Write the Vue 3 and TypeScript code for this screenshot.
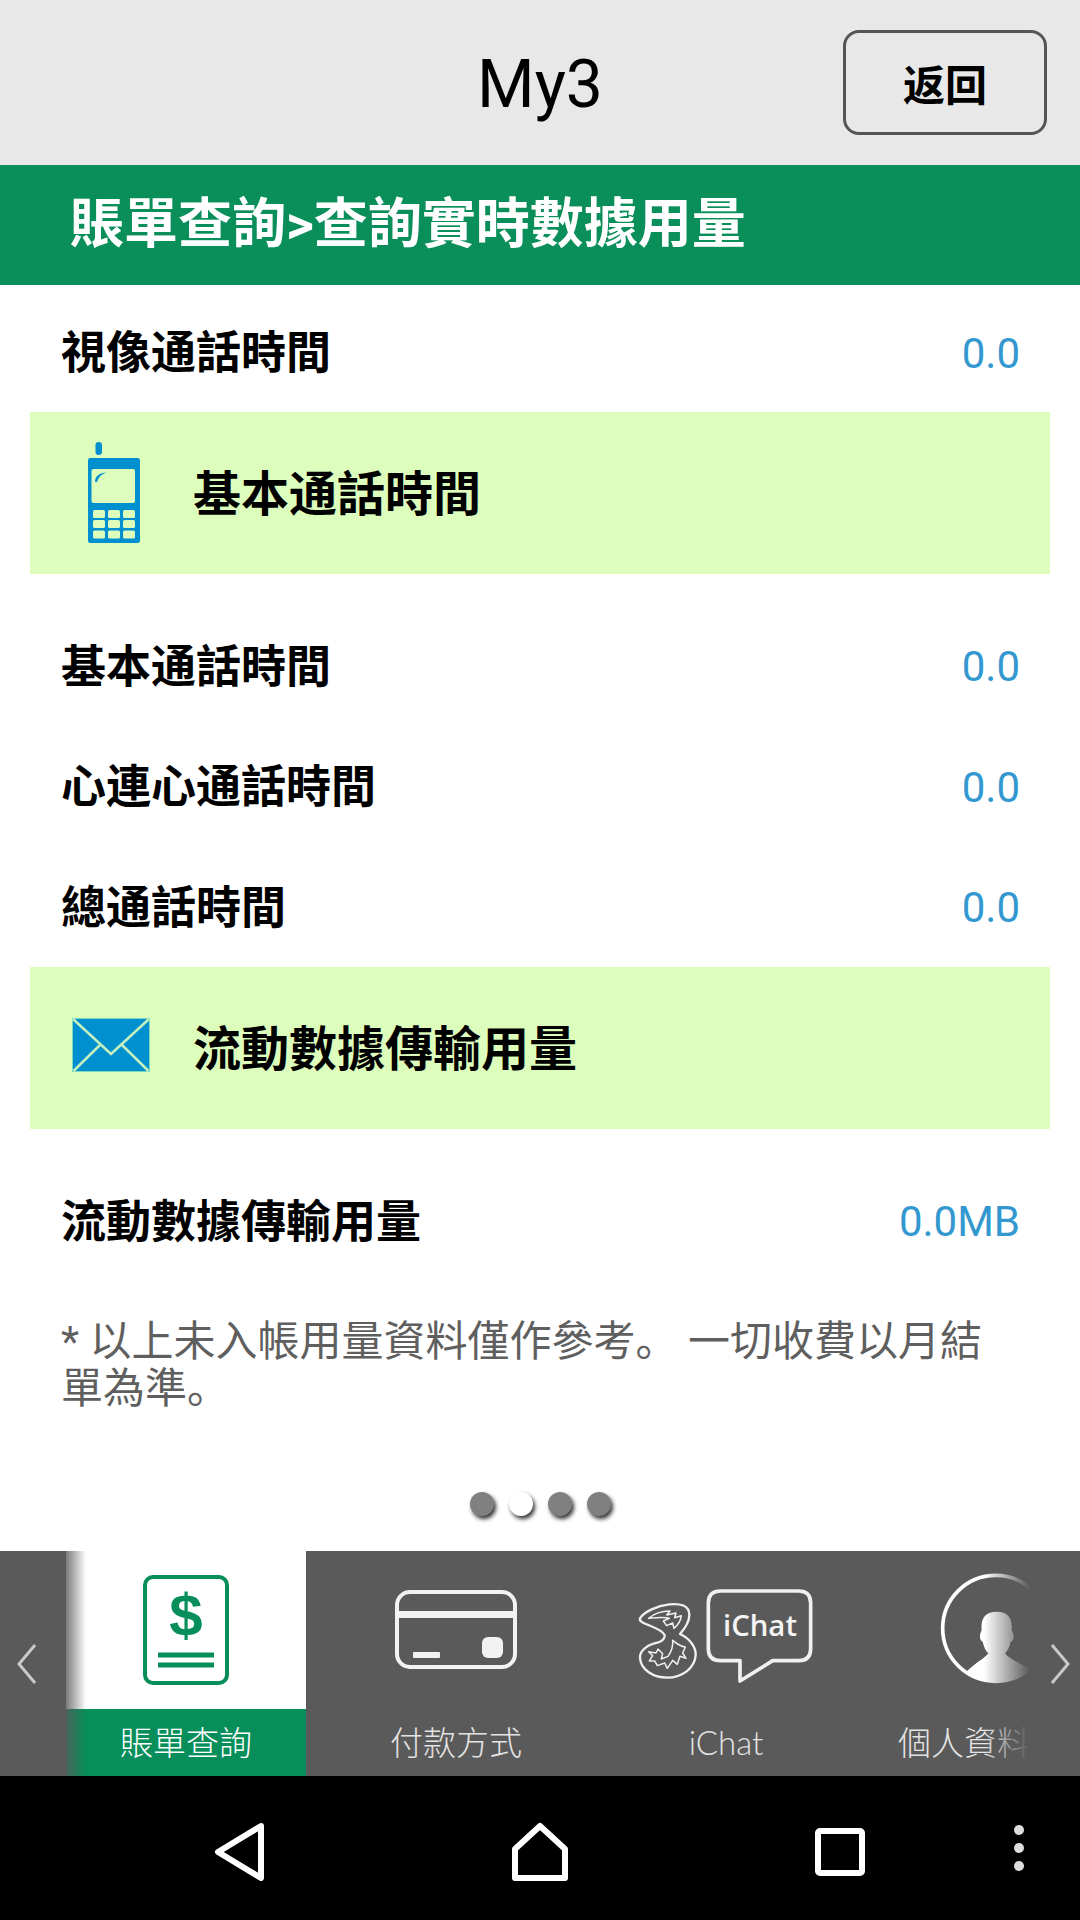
<script setup lang="ts">
interface Row { label: string; value: string }
const firstRows: Row[] = [{ label: '視像通話時間', value: '0.0' }]
const callRows: Row[] = [
  { label: '基本通話時間', value: '0.0' },
  { label: '心連心通話時間', value: '0.0' },
  { label: '總通話時間', value: '0.0' },
]
const dataRows: Row[] = [{ label: '流動數據傳輸用量', value: '0.0MB' }]
const dots: boolean[] = [false, true, false, false]
const keyRows: number[] = [70, 80, 90.5]
const keyCols: number[] = [21, 36, 51]
</script>

<template>
  <div class="screen">
    <header class="topbar">
      <div class="app-title">My3</div>
      <button class="back-btn" type="button">返回</button>
    </header>
    <div class="crumb">賬單查詢&gt;查詢實時數據用量</div>

    <main class="content">
      <div class="rows first">
        <div v-for="r in firstRows" :key="r.label" class="row">
          <span class="label">{{ r.label }}</span><span class="value">{{ r.value }}</span>
        </div>
      </div>

      <section class="band">
        <span class="band-icon">
          <svg width="78" height="105" viewBox="0 0 78 105">
            <rect x="23.500" y="2" width="6.500" height="13" rx="3.200" fill="#0090d0" />
            <rect x="16" y="18" width="52" height="85" rx="2.500" fill="#0090d0" />
            <rect x="19.500" y="29" width="43.500" height="34" rx="2" fill="#dcfdbc" />
            <path d="M23 42 C23 36 27 33 35 32.500 C30 34 27 36 25 42 Z" fill="#0090d0" />
            <template v-for="y in keyRows" :key="y">
              <rect v-for="x in keyCols" :key="x" :x="x" :y="y" width="12" height="8" rx="1.500" fill="#dcfdbc" />
            </template>
          </svg>
        </span>
        <span class="band-title">基本通話時間</span>
      </section>

      <div class="rows">
        <div v-for="r in callRows" :key="r.label" class="row">
          <span class="label">{{ r.label }}</span><span class="value">{{ r.value }}</span>
        </div>
      </div>

      <section class="band">
        <span class="band-icon">
          <svg class="mail" width="78" height="54" viewBox="0 0 78 54">
            <rect x="0.500" y="0.500" width="77" height="53" fill="#0090d0" stroke="#7fd8c0" stroke-width="1" />
            <path d="M1 1 L39 36 L77 1" fill="none" stroke="#c4f0c0" stroke-width="2.500" />
            <path d="M1.500 53 L28 27 M76.500 53 L50 27" fill="none" stroke="#c4f0c0" stroke-width="2.500" />
          </svg>
        </span>
        <span class="band-title">流動數據傳輸用量</span>
      </section>

      <div class="rows">
        <div v-for="r in dataRows" :key="r.label" class="row">
          <span class="label">{{ r.label }}</span><span class="value">{{ r.value }}</span>
        </div>
      </div>

      <p class="note">* 以上未入帳用量資料僅作參考。 一切收費以月結單為準。</p>

      <div class="dots">
        <span v-for="(on, i) in dots" :key="i" class="dot" :class="{ on }"></span>
      </div>
    </main>

    <nav class="tabbar">
      <div class="chev-cell left">
        <svg width="22" height="44" viewBox="0 0 22 44"><path d="M19 3 L3 22 L19 41" fill="none" stroke="#c8c8c8" stroke-width="3" /></svg>
      </div>
      <div class="track">
        <div class="tab active">
          <svg class="tab-icon" width="240" height="158" viewBox="0 0 240 158">
            <rect x="79" y="26" width="82" height="106" rx="8" fill="none" stroke="#078e5a" stroke-width="4" />
            <text x="120" y="85" text-anchor="middle" class="dollar">$</text>
            <path d="M92 104 H148 M92 114 H148" stroke="#078e5a" stroke-width="5" />
          </svg>
          <div class="tab-label">賬單查詢</div>
        </div>
        <div class="tab">
          <svg class="tab-icon" width="240" height="158" viewBox="0 0 240 158">
            <rect x="61" y="41" width="118" height="75" rx="13" fill="none" stroke="#f2f2f2" stroke-width="4" />
            <path d="M60 63.500 H180" stroke="#f2f2f2" stroke-width="7" />
            <rect x="77" y="101" width="27" height="6" rx="1" fill="#f2f2f2" />
            <rect x="146" y="86" width="21" height="21" rx="6" fill="#f2f2f2" />
          </svg>
          <div class="tab-label">付款方式</div>
        </div>
        <div class="tab">
          <svg class="tab-icon" width="240" height="158" viewBox="0 0 240 158">
            <g transform="translate(24 34) scale(0.3333)">
              <path d="M30 100 C40 82 80 62 118 58 C150 55 178 60 178 90 C178 112 165 130 150 147 C178 160 198 185 197 210 C195 250 155 278 112 278 C70 278 32 255 30 218 C29 195 55 178 85 172 C98 168 106 158 104 150 C100 138 75 128 55 120 C40 114 27 110 30 100 Z" fill="none" stroke="#f0f0f0" stroke-width="7" stroke-linejoin="round" />
              <path d="M56 100 C72 86 96 78 120 78 L110 90 L138 84 L134 98 L154 92 C152 108 142 122 132 130 L128 114 L110 122 L100 108 L118 100 C100 95 78 98 56 100 Z" fill="none" stroke="#f0f0f0" stroke-width="4.500" stroke-linejoin="round" />
              <path d="M128 166 C140 176 150 184 166 186 L158 204 L168 220 L150 214 L142 238 L128 226 L112 250 L104 234 L82 242 L74 228 L58 228 L68 212 L56 200 L78 204 L84 192 L98 206 L94 222 L114 214 C124 200 130 184 128 166 Z" fill="none" stroke="#f0f0f0" stroke-width="4.500" stroke-linejoin="round" />
              <path d="M272 18 H506 Q542 18 542 54 V191 Q542 227 506 227 H428 L330 288 V227 H272 Q235 227 235 191 V54 Q235 18 272 18 Z" fill="none" stroke="#f0f0f0" stroke-width="11" stroke-linejoin="round" />
              <text x="390" y="154" text-anchor="middle" class="chat-word">iChat</text>
            </g>
          </svg>
          <div class="tab-label">iChat</div>
        </div>
        <div class="tab">
          <svg class="tab-icon" width="240" height="158" viewBox="0 0 240 158">
            <g transform="translate(54 14) scale(0.3333)">
              <circle cx="197" cy="190" r="159" fill="none" stroke="#ffffff" stroke-width="11" />
              <path d="M155 195 C152 160 165 140 200 140 C235 140 248 160 245 195 C256 215 250 228 242 230 C238 248 232 258 225 265 C235 280 265 292 300 311 A159 159 0 0 1 108 322 C140 290 165 280 175 265 C168 258 162 248 158 230 C150 228 146 215 155 195 Z" fill="#ffffff" />
            </g>
          </svg>
          <div class="tab-label clipped">個人資料</div>
        </div>
        <div class="fade-left"></div>
        <div class="fade-right"></div>
      </div>
      <div class="chev-cell right">
        <svg width="22" height="44" viewBox="0 0 22 44"><path d="M3 3 L19 22 L3 41" fill="none" stroke="#c8c8c8" stroke-width="3" /></svg>
      </div>
    </nav>

    <footer class="sysbar">
      <span class="sys-cell nudged">
        <svg width="52" height="58" viewBox="0 0 52 58"><path d="M47 3 L4 29 L47 55 Z" fill="none" stroke="#fff" stroke-width="6" stroke-linejoin="round" /></svg>
      </span>
      <span class="sys-cell nudged">
        <svg width="58" height="60" viewBox="0 0 58 60"><path d="M29 4 L54 27 V56 H4 V27 Z" fill="none" stroke="#fff" stroke-width="6" stroke-linejoin="round" /></svg>
      </span>
      <span class="sys-cell nudged">
        <svg width="50" height="48" viewBox="0 0 50 48"><rect x="3" y="3" width="44" height="42" rx="2" fill="none" stroke="#fff" stroke-width="6" /></svg>
      </span>
      <span class="sys-cell kebab">
        <i></i><i></i><i></i>
      </span>
    </footer>
  </div>
</template>

<style scoped>
.screen {
  width: 1080px;
  height: 1920px;
  display: flex;
  flex-direction: column;
  overflow: hidden;
  background: #ffffff;
  font-family: Roboto, "Noto Sans CJK SC", sans-serif;
  color: #000000;
}
.topbar {
  height: 165px;
  flex: none;
  display: grid;
  grid-template-columns: 1fr auto 1fr;
  align-items: center;
  background: #e8e8e8;
}
.app-title {
  grid-column: 2;
  font-size: 66px;
  line-height: 1;
  padding-top: 4px;
}
.back-btn {
  grid-column: 3;
  justify-self: end;
  width: 204px;
  height: 105px;
  margin-right: 33px;
  box-sizing: border-box;
  border: 3px solid #555555;
  border-radius: 16px;
  background: #e8e8e8;
  font-family: inherit;
  font-size: 42px;
  font-weight: 700;
  color: #000000;
  padding: 0;
}
.crumb {
  height: 120px;
  flex: none;
  background: #0a8e5a;
  color: #ffffff;
  font-size: 54px;
  font-weight: 700;
  line-height: 120px;
  padding-left: 70px;
}
.content {
  flex: 1;
  min-height: 0;
  display: flex;
  flex-direction: column;
  padding: 0 30px;
}
.rows {
  padding: 32px 30px 0 31px;
}
.rows.first {
  padding-top: 7px;
}
.row {
  height: 120.500px;
  display: flex;
  align-items: center;
  justify-content: space-between;
}
.rows.first .row {
  height: 120px;
}
.label {
  font-size: 45px;
  font-weight: 700;
  padding-bottom: 5px;
}
.value {
  font-size: 42px;
  color: #3498d0;
  padding-top: 2px;
}
.band {
  height: 161.500px;
  flex: none;
  display: flex;
  align-items: center;
  padding-left: 42px;
  background: #dcfdbc;
}
.band-icon {
  width: 121px;
  display: flex;
}
.mail {
  margin-bottom: 6px;
}
.band-title {
  font-size: 48px;
  font-weight: 700;
  padding-bottom: 6px;
}
.note {
  margin: 37px 0 0 31px;
  width: 950px;
  font-size: 42px;
  line-height: 47px;
  color: #5f5f5f;
}
.dots {
  margin-top: auto;
  margin-bottom: 35px;
  display: flex;
  justify-content: center;
  gap: 15px;
}
.dot {
  width: 24px;
  height: 24px;
  border-radius: 50%;
  background: #808080;
  box-shadow: 2px 3px 4px #333333;
}
.dot.on {
  background: #ffffff;
}
.tabbar {
  height: 225px;
  flex: none;
  display: flex;
  background: #5a5a5a;
}
.chev-cell {
  flex: none;
  display: flex;
  align-items: center;
}
.chev-cell.left {
  width: 66px;
  padding-left: 16px;
  box-sizing: border-box;
}
.chev-cell.right {
  width: 50px;
  padding-left: 19px;
  box-sizing: border-box;
}
.track {
  position: relative;
  width: 964px;
  flex: none;
  display: flex;
  gap: 30px;
  overflow: hidden;
}
.tab {
  width: 240px;
  flex: none;
  display: flex;
  flex-direction: column;
}
.tab-icon {
  display: block;
  flex: none;
}
.tab.active .tab-icon {
  background: #ffffff;
}
.tab-label {
  height: 67px;
  line-height: 67px;
  text-align: center;
  font-family: Lato, "Noto Sans CJK SC", sans-serif;
  font-size: 33px;
  font-weight: 300;
  color: #e4e4e4;
}
.tab.active .tab-label {
  background: #078e5a;
  color: #ffffff;
}
.tab-label.clipped {
  text-align: left;
  padding-left: 22px;
}
.dollar {
  font-family: "Liberation Sans", sans-serif;
  font-size: 60px;
  font-weight: 700;
  fill: #078e5a;
}
.chat-word {
  font-family: "Open Sans", sans-serif;
  font-size: 88px;
  font-weight: 600;
  fill: #f4f4f4;
}
.fade-left {
  position: absolute;
  left: 0;
  top: 0;
  bottom: 0;
  width: 20px;
  background: linear-gradient(to right, rgba(90, 90, 90, 0.8), rgba(90, 90, 90, 0));
}
.fade-right {
  position: absolute;
  right: 0;
  top: 0;
  bottom: 0;
  width: 46px;
  background: linear-gradient(to right, rgba(90, 90, 90, 0), #5a5a5a);
}
.sysbar {
  height: 144px;
  flex: none;
  display: flex;
  align-items: center;
  padding-left: 90px;
  background: #000000;
}
.sys-cell {
  width: 300px;
  flex: none;
  display: flex;
  justify-content: center;
  align-items: center;
}
.sys-cell.nudged {
  padding-top: 8px;
}
.kebab {
  width: 58px;
  flex-direction: column;
  gap: 8px;
}
.kebab i {
  width: 10px;
  height: 10px;
  border-radius: 50%;
  background: #dddddd;
}
</style>
